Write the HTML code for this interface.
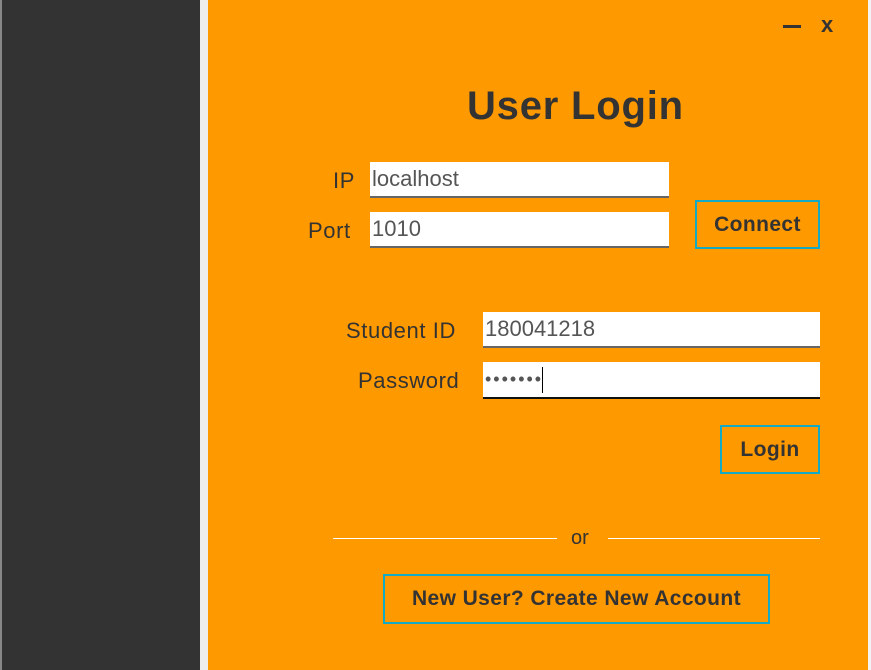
<!DOCTYPE html>
<html><head><meta charset="utf-8"><style>
*{margin:0;padding:0;box-sizing:border-box}
body{width:871px;height:670px;overflow:hidden;background:#ff9900;font-family:"Liberation Sans",sans-serif;position:relative}
.a{position:absolute}
.lbl{color:#333;font-size:22px;letter-spacing:0.6px}
.fld{background:#fff;border-bottom:2px solid #666;font-size:22px;color:#555;padding-left:2px;line-height:34px}
.btn{border:2px solid #14a9c4;color:#333;font-weight:bold;font-size:21px;display:flex;align-items:center;justify-content:center;letter-spacing:0.4px}
</style></head><body>
<div class="a" style="left:0;top:0;width:2px;height:670px;background:#888"></div>
<div class="a" style="left:2px;top:0;width:198px;height:670px;background:#333"></div>
<div class="a" style="left:200px;top:0;width:8px;height:670px;background:#eee"></div>
<div class="a" style="left:868px;top:0;width:3px;height:670px;background:#f3f3f3"></div>
<div class="a" style="left:783px;top:25px;width:18px;height:3px;background:#333"></div>
<div class="a" style="left:821px;top:12px;font-size:22px;font-weight:bold;color:#333">x</div>
<div class="a" style="left:467px;top:84px;font-size:40px;font-weight:bold;color:#333;letter-spacing:0.8px">User Login</div>
<div class="a lbl" style="left:333px;top:168px">IP</div>
<div class="a lbl" style="left:308px;top:218px">Port</div>
<div class="a fld" style="left:370px;top:162px;width:299px;height:36px">localhost</div>
<div class="a fld" style="left:370px;top:212px;width:299px;height:36px">1010</div>
<div class="a btn" style="left:695px;top:200px;width:125px;height:49px">Connect</div>
<div class="a lbl" style="left:346px;top:318px">Student ID</div>
<div class="a lbl" style="left:358px;top:368px">Password</div>
<div class="a fld" style="left:483px;top:312px;width:337px;height:36px">180041218</div>
<div class="a fld" style="left:483px;top:362px;width:337px;height:37px;border-bottom-color:#111;font-size:18px;letter-spacing:2px">•••••••<span style="display:inline-block;width:1px;height:26px;background:#000;vertical-align:middle;margin-left:-1px"></span></div>
<div class="a btn" style="left:720px;top:425px;width:100px;height:49px">Login</div>
<div class="a" style="left:333px;top:538px;width:224px;height:1px;background:#fff"></div>
<div class="a" style="left:608px;top:538px;width:212px;height:1px;background:#fff"></div>
<div class="a" style="left:571px;top:527px;font-size:20px;color:#333">or</div>
<div class="a btn" style="left:383px;top:574px;width:387px;height:50px">New User? Create New Account</div>
</body></html>
